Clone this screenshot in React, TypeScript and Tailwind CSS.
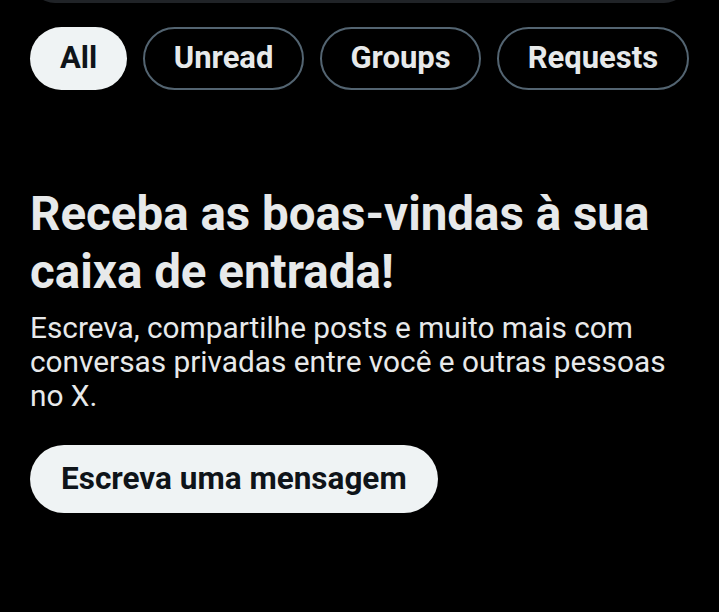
import React from "react";

const tabs = ["All", "Unread", "Groups", "Requests"];

export default function App() {
  return (
    <div
      className="w-[719px] h-[612px] bg-black overflow-hidden text-[#e7e9ea]"
      style={{ fontFamily: "Roboto, 'Noto Sans', sans-serif" }}
    >
      <div className="px-[30px]">
        {/* search bar, mostly scrolled off */}
        <div className="h-[50px] -mt-[47px] rounded-full bg-[#202327]" />

        <div className="flex gap-[16px] mt-[24px] whitespace-nowrap">
          {tabs.map((t, i) => (
            <div
              key={t}
              className={
                i === 0
                  ? "h-[63px] px-[30px] rounded-full bg-[#eff3f4] text-[#0f1419] flex items-center text-[31px] font-bold"
                  : "h-[63px] px-[28.5px] rounded-full border-[2px] border-[#536471] flex items-center text-[31px] font-bold"
              }
            >
              {t}
            </div>
          ))}
        </div>

        <h1 className="mt-[95px] text-[47.5px] leading-[58px] font-bold">
          Receba as boas-vindas à sua
          <br />
          caixa de entrada!
        </h1>
        <p className="mt-[10px] text-[29.8px] leading-[34px] text-[#e7e9ea]">
          Escreva, compartilhe posts e muito mais com
          <br />
          conversas privadas entre você e outras pessoas
          <br />
          no X.
        </p>

        <button className="mt-[32px] h-[68px] px-[31px] rounded-full bg-[#eff3f4] text-[#0f1419] text-[31.5px] font-bold">
          Escreva uma mensagem
        </button>
      </div>
    </div>
  );
}
